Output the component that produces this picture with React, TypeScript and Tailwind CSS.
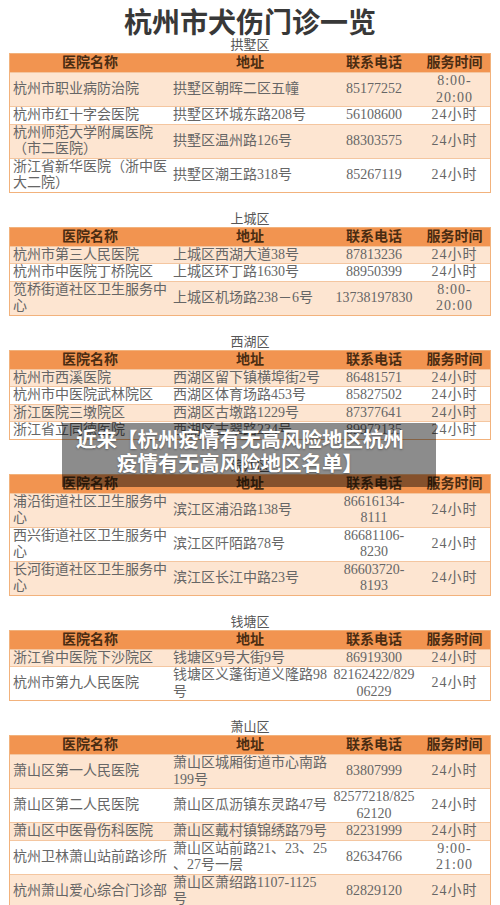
type Row = {
  name: string[];
  addr: string[];
  phone: string[];
  time: string[];
};

type Section = {
  district: string;
  rows: Row[];
};

const r = (name: string | string[], addr: string | string[], phone: string | string[], time: string | string[]): Row => ({
  name: Array.isArray(name) ? name : [name],
  addr: Array.isArray(addr) ? addr : [addr],
  phone: Array.isArray(phone) ? phone : [phone],
  time: Array.isArray(time) ? time : [time],
});

const sections: Section[] = [
  {
    district: "拱墅区",
    rows: [
      r("杭州市职业病防治院", "拱墅区朝晖二区五幢", "85177252", ["8:00-", "20:00"]),
      r("杭州市红十字会医院", "拱墅区环城东路208号", "56108600", "24小时"),
      r(["杭州师范大学附属医院", "（市二医院）"], "拱墅区温州路126号", "88303575", "24小时"),
      r(["浙江省新华医院（浙中医", "大二院）"], "拱墅区潮王路318号", "85267119", "24小时"),
    ],
  },
  {
    district: "上城区",
    rows: [
      r("杭州市第三人民医院", "上城区西湖大道38号", "87813236", "24小时"),
      r("杭州市中医院丁桥院区", "上城区环丁路1630号", "88950399", "24小时"),
      r(["笕桥街道社区卫生服务中", "心"], "上城区机场路238－6号", "13738197830", ["8:00-", "20:00"]),
    ],
  },
  {
    district: "西湖区",
    rows: [
      r("杭州市西溪医院", "西湖区留下镇横埠街2号", "86481571", "24小时"),
      r("杭州市中医院武林院区", "西湖区体育场路453号", "85827502", "24小时"),
      r("浙江医院三墩院区", "西湖区古墩路1229号", "87377641", "24小时"),
      r("浙江省立同德医院", "西湖区古翠路234号", "89972135", "24小时"),
    ],
  },
  {
    district: "滨江区",
    rows: [
      r(["浦沿街道社区卫生服务中", "心"], "滨江区浦沿路138号", ["86616134-", "8111"], "24小时"),
      r(["西兴街道社区卫生服务中", "心"], "滨江区阡陌路78号", ["86681106-", "8230"], "24小时"),
      r(["长河街道社区卫生服务中", "心"], "滨江区长江中路23号", ["86603720-", "8193"], "24小时"),
    ],
  },
  {
    district: "钱塘区",
    rows: [
      r("浙江省中医院下沙院区", "钱塘区9号大街9号", "86919300", "24小时"),
      r("杭州市第九人民医院", ["钱塘区义蓬街道义隆路98", "号"], ["82162422/829", "06229"], "24小时"),
    ],
  },
  {
    district: "萧山区",
    rows: [
      r("萧山区第一人民医院", ["萧山区城厢街道市心南路", "199号"], "83807999", "24小时"),
      r("萧山区第二人民医院", "萧山区瓜沥镇东灵路47号", ["82577218/825", "62120"], "24小时"),
      r("萧山区中医骨伤科医院", "萧山区戴村镇锦绣路79号", "82231999", "24小时"),
      r("杭州卫林萧山站前路诊所", ["萧山区站前路21、23、25", "、27号一层"], "82634766", ["9:00-", "21:00"]),
      r("杭州萧山爱心综合门诊部", ["萧山区萧绍路1107-1125", "号"], "82829120", "24小时"),
    ],
  },
];

const Lines = ({ lines }: { lines: string[] }) => (
  <div className="whitespace-nowrap">
    {lines.map((l, i) => (
      <div key={i}>{l}</div>
    ))}
  </div>
);

const Table = ({ section }: { section: Section }) => (
  <div>
    <div className="h-[16px] text-center text-[13px] leading-[16px] text-[#555]">{section.district}</div>
    <div className="mx-[9px] border border-[#f2b27c]">
      <div className="grid h-[18px] grid-cols-[160px_160px_88px_73px] bg-[#f29450] text-center text-[14px] font-bold leading-[18px] text-[#4a2c12]">
        <div>医院名称</div>
        <div>地址</div>
        <div>联系电话</div>
        <div>服务时间</div>
      </div>
      {section.rows.map((row, i) => (
        <div
          key={i}
          className={`grid grid-cols-[160px_160px_88px_73px] border-t border-[#f4c6a0] text-[14px] leading-[16.5px] text-[#666] ${
            i % 2 === 0 ? "bg-[#fde5d1]" : "bg-white"
          }`}
        >
          <div className="flex items-center pl-[3px]">
            <Lines lines={row.name} />
          </div>
          <div className="flex items-center pl-[3px]">
            <Lines lines={row.addr} />
          </div>
          <div className="flex items-center justify-center text-center">
            <Lines lines={row.phone} />
          </div>
          <div className="flex items-center justify-center text-center tracking-[1px]">
            <Lines lines={row.time} />
          </div>
        </div>
      ))}
    </div>
  </div>
);

export default function App() {
  return (
    <div
      className="relative h-[905px] w-[500px] overflow-hidden bg-white"
      style={{ fontFamily: '"Liberation Serif", "Noto Sans CJK SC", serif' }}
    >
      <div className="h-[37px] pt-[4px] text-center text-[28px] font-bold leading-[34px] text-[#383838]">
        <span style={{ fontFamily: '"Noto Sans CJK SC", sans-serif' }}>杭州市犬伤门诊一览</span>
      </div>
      <div className="flex flex-col gap-[18px]">
        {sections.map((s) => (
          <Table key={s.district} section={s} />
        ))}
      </div>

      {/* 标题遮罩 */}
      <div
        className="absolute left-[62px] top-[423px] h-[64px] w-[374px] bg-black/45 pr-[18px] pt-[3px] text-center text-[20.5px] font-bold leading-[24px] text-white [text-shadow:0_1px_2px_rgba(0,0,0,0.35)]"
        style={{ fontFamily: '"Noto Sans CJK SC", sans-serif' }}
      >
        <div>近来【杭州疫情有无高风险地区杭州</div>
        <div>疫情有无高风险地区名单】</div>
      </div>
    </div>
  );
}
